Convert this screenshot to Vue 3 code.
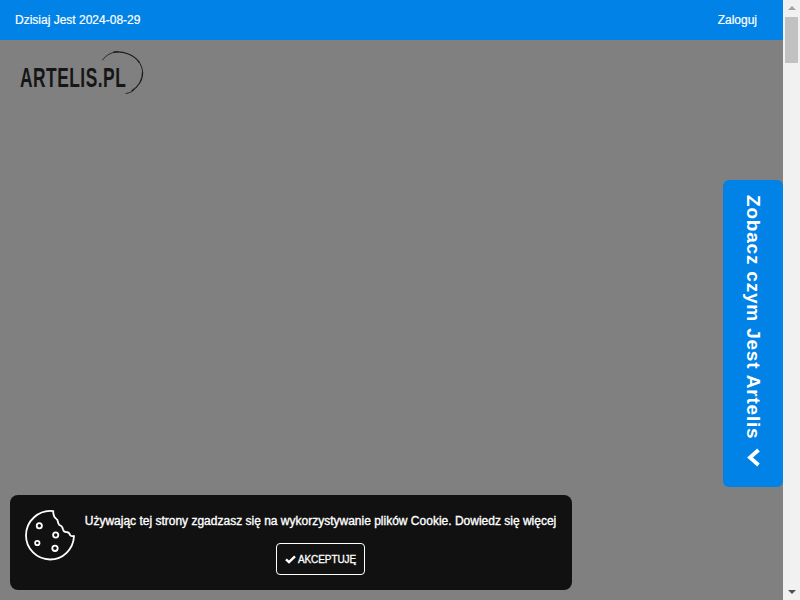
<script setup>
const dateLabel = 'Dzisiaj Jest 2024-08-29'
</script>

<template>
  <div class="screen">
    <div class="page">
      <header class="topbar">
        <span class="date">{{ dateLabel }}</span>
        <a class="login">Zaloguj</a>
      </header>
      <main class="content">
        <div class="logo">
          <span class="logo-text">ARTELIS.PL</span>
          <svg class="logo-swirl" width="44" height="44" viewBox="0 0 44 44" fill="none" stroke="#1c1c1c" stroke-linecap="round">
            <path d="M0.5 9 C4 4 10 1 16 0.8" stroke-width="0.9" />
            <path d="M12 1 C22 0 32 4 37 11" stroke-width="1.3" />
            <path d="M37 11 C40 15 41 20 40.5 24" stroke-width="1" />
            <path d="M40.5 21 C41 29 36 36 30 39.5" stroke-width="1.2" />
            <path d="M32 39 C30 41 27 42 24 42.5" stroke-width="0.9" />
          </svg>
        </div>
      </main>

      <button class="side-tab" type="button">
        <span class="side-label">Zobacz czym Jest Artelis</span>
        <svg class="side-chevron" width="15" height="19" viewBox="0 0 15 19" fill="none" stroke="#fff" stroke-width="3.8">
          <path d="M12.5 2 L4 9.5 L12.5 17" />
        </svg>
      </button>

      <section class="cookie">
        <svg class="cookie-icon" width="52" height="52" viewBox="0 0 52 52" fill="none" stroke="#fff" stroke-width="1.8">
          <path d="M28.3 1.1 C13.5 -0.6 1 11 1 25.5 C1 38.8 11.8 49.5 25 49.5 C37.8 49.5 48.4 39.4 49 26 C47.6 26.4 46 26.2 45 25 C44.6 23.4 43.8 22.4 42 22.2 C39.6 22.4 38.4 21 38 19.4 C37.6 17 36.6 15.6 34.4 15 C33 13.8 33 12 32.4 10 C31.6 8.6 29.6 8.2 29 6 C28.6 4.4 28 3 28.3 1.1 Z" stroke-linejoin="round" />
          <circle cx="14.3" cy="15.7" r="2.6" />
          <circle cx="30.7" cy="25" r="2.6" />
          <circle cx="12.3" cy="33" r="2.2" />
          <circle cx="30" cy="38.3" r="2.7" />
        </svg>
        <div class="cookie-body">
          <p class="cookie-text">Używając tej strony zgadzasz się na wykorzystywanie plików Cookie. Dowiedz się więcej</p>
          <button class="accept" type="button">
            <svg width="11" height="9" viewBox="0 0 11 9" fill="none" stroke="#fff" stroke-width="2.4">
              <path d="M1 4.4 L4 7.2 L10 1.4" />
            </svg>
            <span>AKCEPTUJĘ</span>
          </button>
        </div>
      </section>
    </div>

    <div class="scrollbar">
      <span class="arrow arrow-up"></span>
      <div class="track"><div class="thumb"></div></div>
      <span class="arrow arrow-down"></span>
    </div>
  </div>
</template>

<style>
html, body { margin: 0; height: 100%; overflow: hidden; }
#app { height: 100%; }
</style>

<style scoped>
.screen {
  display: flex;
  width: 800px;
  height: 600px;
  font-family: "Liberation Sans", Arial, sans-serif;
}
.page {
  position: relative;
  flex: 1;
  display: flex;
  flex-direction: column;
  background: #808080;
}
.topbar {
  height: 40px;
  flex: none;
  display: flex;
  align-items: center;
  justify-content: space-between;
  padding: 0 26px 0 15px;
  background: #0082e6;
  color: #fff;
  font-size: 12px;
  -webkit-text-stroke: 0.2px #fff;
}
.content { flex: 1; padding: 10px 0 0 20px; }
.logo {
  position: relative;
  width: 130px;
  height: 50px;
}
.logo-text {
  position: absolute;
  left: 0;
  top: 14px;
  font-size: 28px;
  font-weight: 700;
  line-height: 28px;
  color: #161616;
  white-space: nowrap;
  letter-spacing: 0.8px;
  transform: scaleX(0.62);
  transform-origin: left center;
}
.logo-swirl { position: absolute; left: 82px; top: 1px; }
.side-tab {
  position: absolute;
  top: 180px;
  right: 0;
  width: 60px;
  height: 307px;
  padding: 15px 0 0;
  box-sizing: border-box;
  border: 0;
  border-radius: 6px;
  background: #0082e6;
  color: #fff;
  display: flex;
  flex-direction: column;
  align-items: center;
  font-family: inherit;
}
.side-label {
  writing-mode: vertical-rl;
  font-size: 19px;
  font-weight: 700;
  letter-spacing: 0.8px;
  line-height: 24px;
  white-space: nowrap;
}
.side-chevron { margin-top: 9px; }
.cookie {
  position: absolute;
  left: 10px;
  top: 495px;
  width: 562px;
  height: 95px;
  box-sizing: border-box;
  border-radius: 8px;
  background: #111;
  color: #fff;
  display: flex;
  padding: 15px 0 0 15px;
}
.cookie-icon { flex: none; }
.cookie-body {
  margin-left: 8px;
  width: 471px;
  display: flex;
  flex-direction: column;
  align-items: center;
}
.cookie-text {
  margin: 3px 0 0;
  font-size: 12px;
  line-height: 16px;
  white-space: nowrap;
  -webkit-text-stroke: 0.35px #fff;
}
.accept {
  margin-top: 14px;
  width: 89px;
  height: 32px;
  box-sizing: border-box;
  padding: 0;
  border: 1px solid #fff;
  border-radius: 4px;
  background: transparent;
  color: #fff;
  display: flex;
  align-items: center;
  justify-content: center;
  gap: 2px;
  font-family: inherit;
  font-size: 10px;
  letter-spacing: -0.1px;
  -webkit-text-stroke: 0.3px #fff;
}
.scrollbar {
  flex: none;
  width: 17px;
  background: #f1f1f1;
  display: flex;
  flex-direction: column;
  align-items: center;
}
.arrow {
  flex: none;
  width: 0;
  height: 0;
  border-left: 4px solid transparent;
  border-right: 4px solid transparent;
}
.arrow-up { margin: 6px 0 7px; border-bottom: 4px solid #a3a3a3; }
.arrow-down { margin: 7px 0 6px; border-top: 4px solid #505050; }
.track { flex: 1; width: 100%; display: flex; justify-content: center; }
.thumb { width: 13px; height: 46px; background: #c1c1c1; }
</style>
